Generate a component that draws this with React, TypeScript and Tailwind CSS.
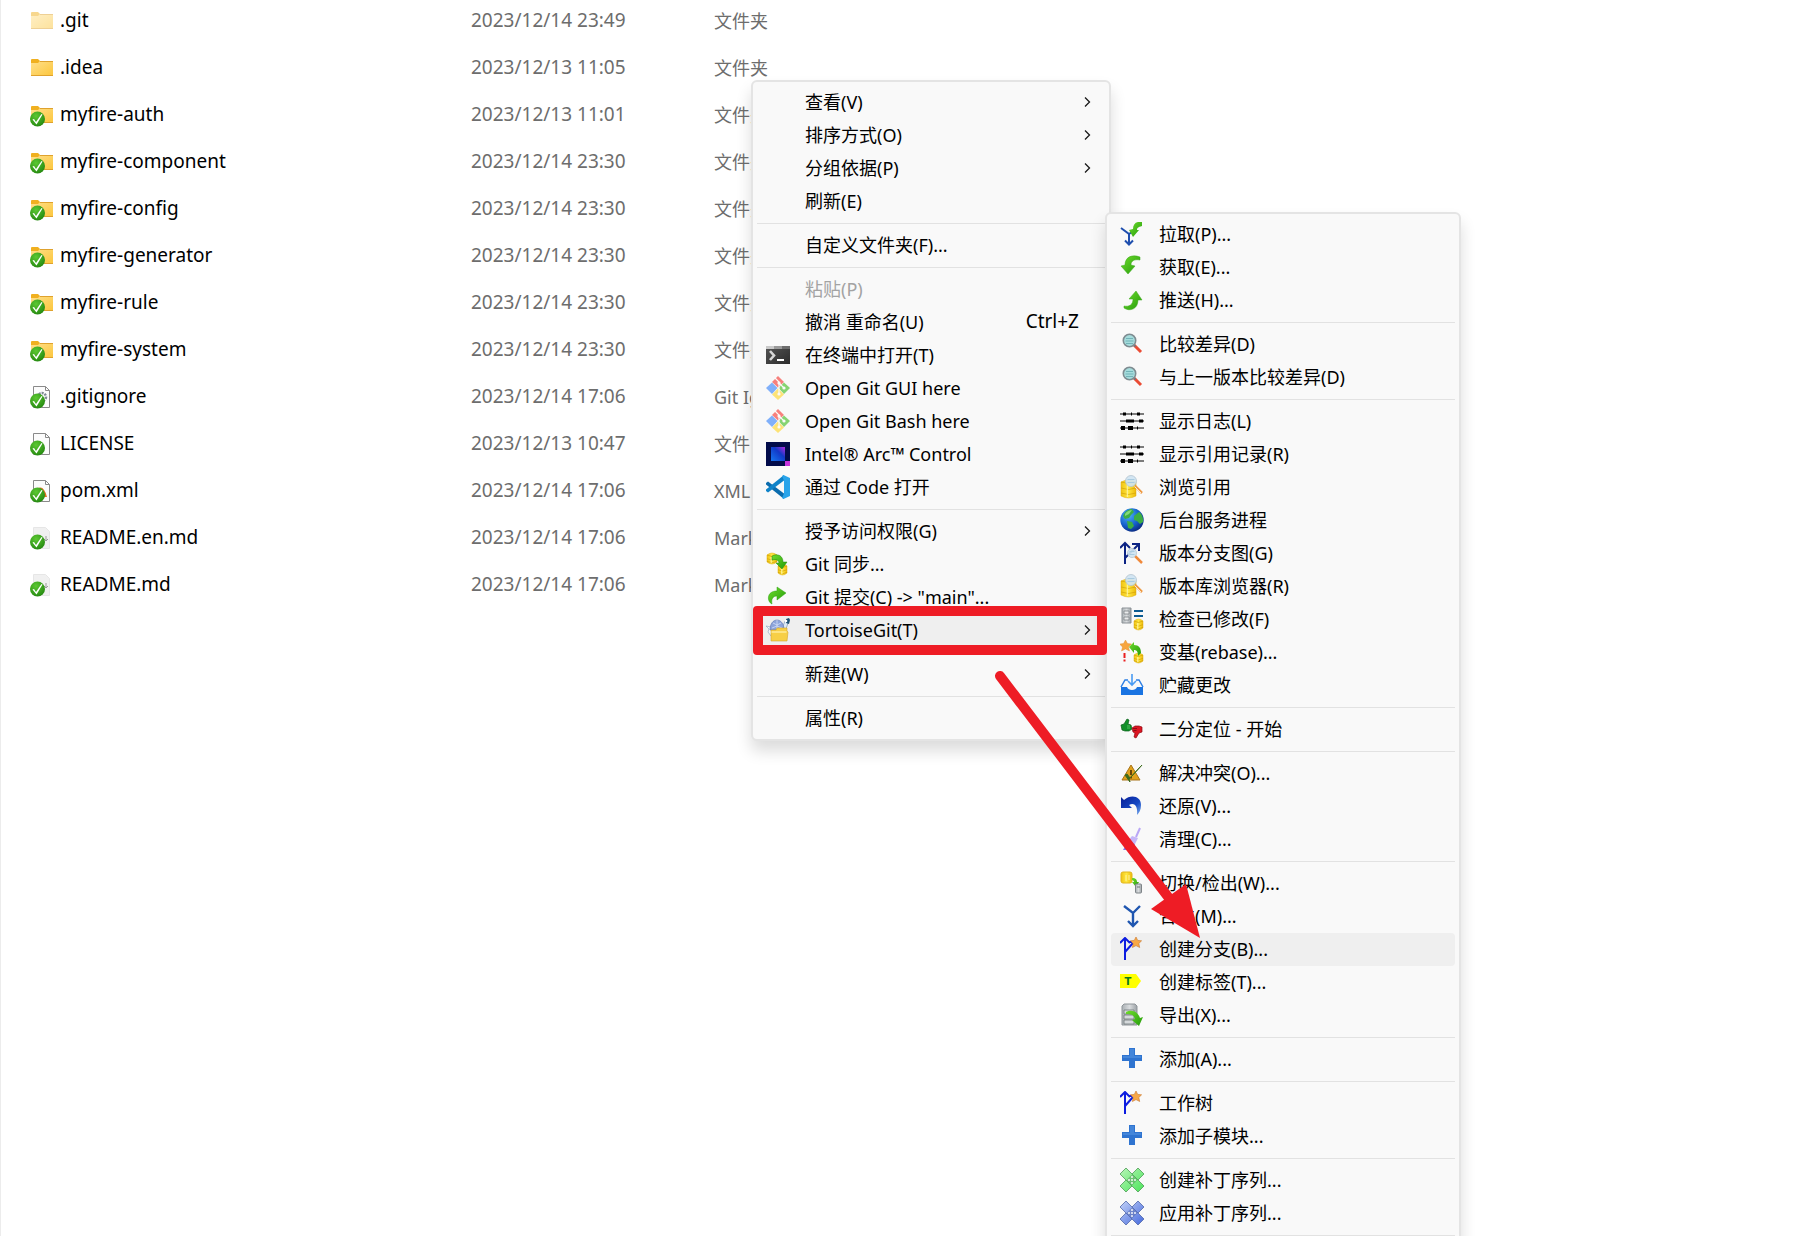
import clsx from "clsx";
import type { ReactNode } from "react";

type FileKind = "hidden" | "folder" | "git" | "blank" | "xml" | "markdown";

interface FileEntry {
  name: string;
  date: string;
  type: string;
  kind: FileKind;
  tracked?: boolean;
}

interface MenuItem {
  label: string;
  icon?: ReactNode;
  shortcut?: string;
  submenu?: boolean;
  disabled?: boolean;
  active?: boolean;
  marked?: boolean;
}

const files: FileEntry[] = [
  { name: ".git", date: "2023/12/14 23:49", type: "文件夹", kind: "hidden" },
  { name: ".idea", date: "2023/12/13 11:05", type: "文件夹", kind: "folder" },
  { name: "myfire-auth", date: "2023/12/13 11:01", type: "文件夹", kind: "folder", tracked: true },
  { name: "myfire-component", date: "2023/12/14 23:30", type: "文件夹", kind: "folder", tracked: true },
  { name: "myfire-config", date: "2023/12/14 23:30", type: "文件夹", kind: "folder", tracked: true },
  { name: "myfire-generator", date: "2023/12/14 23:30", type: "文件夹", kind: "folder", tracked: true },
  { name: "myfire-rule", date: "2023/12/14 23:30", type: "文件夹", kind: "folder", tracked: true },
  { name: "myfire-system", date: "2023/12/14 23:30", type: "文件夹", kind: "folder", tracked: true },
  { name: ".gitignore", date: "2023/12/14 17:06", type: "Git Ignore", kind: "git", tracked: true },
  { name: "LICENSE", date: "2023/12/13 10:47", type: "文件", kind: "blank", tracked: true },
  { name: "pom.xml", date: "2023/12/14 17:06", type: "XML", kind: "xml", tracked: true },
  { name: "README.en.md", date: "2023/12/14 17:06", type: "Markdown", kind: "markdown", tracked: true },
  { name: "README.md", date: "2023/12/14 17:06", type: "Markdown", kind: "markdown", tracked: true },
];

function Icon({ children }: { children: ReactNode }) {
  return (
    <svg viewBox="0 0 24 24" className="size-6 shrink-0" fill="none" aria-hidden="true">
      {children}
    </svg>
  );
}

// Gradients shared by every icon on the page
function IconDefs() {
  return (
    <svg className="absolute size-0" aria-hidden="true">
      <defs>
        <linearGradient id="folder" x1="0" y1="0" x2="1" y2="1">
          <stop offset="0" stopColor="#ffe08c" />
          <stop offset="1" stopColor="#fcc63c" />
        </linearGradient>
        <radialGradient id="check" cx="0.4" cy="0.3" r="0.75">
          <stop offset="0" stopColor="#5cc832" />
          <stop offset="1" stopColor="#23870f" />
        </radialGradient>
        <linearGradient id="green" x1="0" y1="0" x2="1" y2="1">
          <stop offset="0" stopColor="#6fdc2c" />
          <stop offset="1" stopColor="#239b0a" />
        </linearGradient>
        <linearGradient id="gold" x1="0" y1="0" x2="1" y2="0">
          <stop offset="0" stopColor="#f0c414" />
          <stop offset="0.5" stopColor="#ffe740" />
          <stop offset="1" stopColor="#edba0a" />
        </linearGradient>
        <linearGradient id="steel" x1="0" y1="0" x2="1" y2="0">
          <stop offset="0" stopColor="#aab0b4" />
          <stop offset="0.5" stopColor="#d9dcde" />
          <stop offset="1" stopColor="#9ca2a6" />
        </linearGradient>
        <linearGradient id="terminal" x1="0" y1="0" x2="1" y2="1">
          <stop offset="0" stopColor="#555" />
          <stop offset="1" stopColor="#2c2c2c" />
        </linearGradient>
        <linearGradient id="arc" x1="0" y1="1" x2="1" y2="0">
          <stop offset="0" stopColor="#1676f0" />
          <stop offset="0.6" stopColor="#1238c8" />
          <stop offset="1" stopColor="#b32be0" />
        </linearGradient>
        <radialGradient id="ocean" cx="0.35" cy="0.3" r="0.75">
          <stop offset="0" stopColor="#4cb4f4" />
          <stop offset="0.6" stopColor="#1560cc" />
          <stop offset="1" stopColor="#0b2a80" />
        </radialGradient>
        <linearGradient id="undo" x1="0" y1="0" x2="1" y2="1">
          <stop offset="0" stopColor="#0a1f96" />
          <stop offset="0.6" stopColor="#1548c4" />
          <stop offset="1" stopColor="#7fb2f0" />
        </linearGradient>
        <linearGradient id="patchGreen" x1="0" y1="0" x2="1" y2="1">
          <stop offset="0" stopColor="#b8f5b8" />
          <stop offset="1" stopColor="#4be45a" />
        </linearGradient>
        <linearGradient id="patchBlue" x1="0" y1="0" x2="1" y2="1">
          <stop offset="0" stopColor="#c3d2f8" />
          <stop offset="1" stopColor="#4468dc" />
        </linearGradient>
      </defs>
    </svg>
  );
}

function Database({ x, y, w, h }: { x: number; y: number; w: number; h: number }) {
  const ring = (at: number) => `M${x} ${at}q${w / 2} 3 ${w} 0`;
  return (
    <g>
      <path
        d={`M${x} ${y + 2}q${w / 2} -4 ${w} 0v${h - 4}q${-w / 2} 4 ${-w} 0z`}
        fill="url(#gold)"
        stroke="#dcae14"
        strokeWidth="0.5"
      />
      <path d={ring(y + 2) + ring(y + 2 + h / 3) + ring(y + 1 + (h * 2) / 3)} stroke="#d2a20a" strokeWidth="0.7" />
      <path d={`M${x + w * 0.42} ${y + 4}v${h - 5}`} stroke="#fff6a8" strokeWidth="1" />
    </g>
  );
}

function Star() {
  return (
    <path
      d="M16 0l1.700 3.400 3.900.4-2.800 2.700.9 4L16 8.600l-3.600 1.900.8-4-2.800-2.700 3.900-.4z"
      fill="#f9a845"
      stroke="#c8762c"
      strokeWidth="0.6"
    />
  );
}

function Lens({ x, y, r }: { x: number; y: number; r: number }) {
  return (
    <g>
      <circle cx={x} cy={y} r={r} fill="#cfe4f2" fillOpacity="0.92" stroke="#b4c4cf" strokeWidth="0.8" />
      <path d={`M${x - r + 2} ${y - 1.5}h${r * 2 - 4}M${x - r + 2} ${y + 1.5}h${r * 2 - 4}`} stroke="#a9cbe0" />
    </g>
  );
}

const terminalIcon = (
  <Icon>
    <path d="M0 3h24v18H0z" fill="url(#terminal)" />
    <path d="M0 3h8v3H0z" fill="#c9c9c9" />
    <path d="M8 3h8v3H8z" fill="#9a9a9a" />
    <path d="M16 3h8v3h-8z" fill="#6d6d6d" />
    <path d="M4 8l4 4.500-4 4.500" stroke="#d8d8d8" strokeWidth="2.600" />
    <path d="M11 17h7" stroke="#fff" strokeWidth="2" />
  </Icon>
);

const gitIcon = (
  <Icon>
    <path d="M12 0l6 6-6 5.500L6 6z" fill="#f7807c" />
    <path d="M6 6.500l5.500 5.500L6 18l-6-6z" fill="#80b0fa" />
    <path d="M18 6.500l6 5.500-6 6-5.500-6z" fill="#86d472" />
    <path d="M12 12.500l6 6-6 5.500-6-5.500z" fill="#fde377" />
    <path d="M9 2l4 4v13M13 7l5 5" stroke="#fafafa" strokeWidth="1.200" />
    <circle cx="13" cy="7" r="1.600" fill="#fafafa" />
    <circle cx="18" cy="12" r="1.600" fill="#fafafa" />
    <circle cx="13" cy="18" r="1.600" fill="#fafafa" />
  </Icon>
);

const arcIcon = (
  <Icon>
    <path d="M0 0h24v24H0z" fill="#020b4a" />
    <path d="M5 5h14v14H5z" fill="url(#arc)" />
    <path d="M19 19h5v5h-5z" fill="#c433dc" />
  </Icon>
);

const codeIcon = (
  <Icon>
    <path d="M0 8l2-1.500 16 12V24L0 9.500z" fill="#0b6cae" />
    <path d="M0 16l2 1.500L18 5.500V0L0 14.500z" fill="#0f83c9" />
    <path d="M17.500 0L24 3v18l-6.500 3-1.500-1 2-4.500v-13L16 1z" fill="#2aa4ea" />
  </Icon>
);

const syncIcon = (
  <Icon>
    <Database x={1} y={1} w={10} h={11} />
    <Database x={12} y={12} w={9} h={11} />
    <path d="M6 4c6-3 11 0 11 6h4l-5 7-6-6h3c0-3-3-4-7-3z" fill="url(#green)" stroke="#1e8a0c" strokeWidth="0.5" />
  </Icon>
);

const commitIcon = (
  <Icon>
    <path d="M11 2l9 6-9 7v-4c-4 0-6 3-5 8-5-2-6-13 5-13z" fill="url(#green)" stroke="#2fa313" strokeWidth="0.5" />
  </Icon>
);

const tortoiseIcon = (
  <Icon>
    <path d="M0 8l5 1 1 4-1 5-3-4 1-3z" fill="#f2f7fc" stroke="#8aa0bc" strokeWidth="0.6" />
    <path d="M17 8l2-5 3 2-2 6-2 1z" fill="#dcebf8" stroke="#6d86a8" strokeWidth="0.6" />
    <path d="M4 12C4 6 7 2 11 2s7 4 7 10z" fill="#8ca4dc" stroke="#5a70ac" strokeWidth="0.6" />
    <path d="M7 5l4 2 4-2M6 10l5-2 5 2M11 2v9" stroke="#d4def6" strokeWidth="0.8" />
    <path d="M20 1l3-1 1 2-1 4-3-1z" fill="#1f5276" />
    <circle cx="20" cy="3" r="1.300" fill="#fff" />
    <path d="M5 12h5l1-2h10v3l1 1-1 9H5z" fill="#f7cf46" stroke="#d3a62a" strokeWidth="0.6" />
    <path d="M5.500 14h15" stroke="#ffec9e" strokeWidth="1.400" />
  </Icon>
);

const pullIcon = (
  <Icon>
    <path d="M1 6l8 6v10M5 18.500l4 4 4-4M9 12l3-2" stroke="#1f4fae" strokeWidth="2" />
    <path d="M22 0c-6-1-9 2-9 7l-4 1 4 7 6-7h-2c0-2 1-3 5-4z" fill="url(#green)" />
  </Icon>
);

const fetchIcon = (
  <Icon>
    <path d="M20 2C12-1 5 2 5 10l-4 1 7 8 7-8-4-1c0-4 3-6 9-5z" fill="url(#green)" stroke="#3aa81c" strokeWidth="0.5" />
  </Icon>
);

const pushIcon = (
  <Icon>
    <path d="M4 18c5 1 9-1 9-7H9l7-8 6 9h-4c0 9-8 12-14 8z" fill="url(#green)" stroke="#3aa81c" strokeWidth="0.5" />
  </Icon>
);

const diffIcon = (
  <Icon>
    <path d="M14 13l7 7" stroke="#ea4c34" strokeWidth="3" />
    <path d="M13.500 12.500l2 2" stroke="#6e7a80" strokeWidth="2" />
    <circle cx="9.500" cy="8.500" r="6.200" fill="#a6dcdc" stroke="#7f8c91" strokeWidth="1.600" />
    <path d="M6 6.500h7M5.500 9h8M6 11.500h7" stroke="#72b4b8" />
  </Icon>
);

const logIcon = (
  <Icon>
    <path d="M0 5h24M0 12h24M0 19h24" stroke="#000" strokeWidth="1.200" />
    <path d="M3 5h3M11 5h1M17 5h3M6 12h8M19 12h4M17 19h1" stroke="#000" strokeWidth="3" />
    <path d="M1 19h4M8 19h5" stroke="#000" strokeWidth="4" />
  </Icon>
);

const browseIcon = (
  <Icon>
    <Database x={1} y={5} w={15} h={18} />
    <path d="M15 11l7 7" stroke="#ee9a45" strokeWidth="2.500" />
    <path d="M14.500 11.500l6.500 6.500" stroke="#fbe8d0" />
    <Lens x={11} y={6} r={5.5} />
  </Icon>
);

const globeIcon = (
  <Icon>
    <circle cx="12" cy="12" r="11.700" fill="url(#ocean)" />
    <path
      d="M3 8c2-5 6-7 9-7l2 3-3 3-2 3-4 1zM14 8l5-4c3 2 4.500 6 4 10l-3 2-3-3-3-1zM7 13l5 1 2 4-3 3-3-1z"
      fill="#3cae44"
    />
    <path d="M5 6c2-3 5-4 7-4l-3 4-4 2z" fill="#a4ec90" fillOpacity="0.7" />
  </Icon>
);

const graphIcon = (
  <Icon>
    <path d="M5 23V2M0 7l5-5 5 5M5 17L18 4M12 3h7v7" stroke="#0c2384" strokeWidth="2" />
    <path d="M15 15l7 7" stroke="#f08a3c" strokeWidth="2.500" />
    <Lens x={12} y={12} r={4.5} />
  </Icon>
);

const modifiedIcon = (
  <Icon>
    <path d="M2 1h9v15H2z" fill="url(#steel)" stroke="#8b9196" />
    <path d="M4 4h5v3H4zM4 10h5v3H4z" fill="#e9ebec" stroke="#7b8186" strokeWidth="0.8" />
    <path d="M14 4h9M14 9h9" stroke="#0d5c92" strokeWidth="2" />
    <Database x={14} y={12} w={9} h={11} />
  </Icon>
);

const rebaseIcon = (
  <Icon>
    <path d="M5.500 0l2 3.500 4 .5-3 3 1 4-4-2-4 2 1-4-3-3 4-.5z" fill="#f7a53e" stroke="#d8852a" strokeWidth="0.4" />
    <Database x={14} y={13} w={9} h={10} />
    <path d="M9 7l5-5v3c5 0 7 3 7 8l-3 3c0-4-1-6-4-6v3z" fill="url(#green)" />
    <path d="M4.500 13v5M4.500 19.500v2" stroke="#ea2020" strokeWidth="2" />
  </Icon>
);

const stashIcon = (
  <Icon>
    <path d="M1 14h6c1 4 9 4 10 0h6v8H1z" fill="#1a74e2" />
    <path d="M8 7H5l-4 7M16 7h3l4 7" stroke="#2d7fe4" strokeWidth="1.500" />
    <path d="M12 1v10M8 8l4 4 4-4" stroke="#4a9bf2" strokeWidth="1.600" />
  </Icon>
);

const bisectIcon = (
  <Icon>
    <path d="M1 8l3-1 3-5 2 1-1 4 3 1 1 4-3 2-4 0-3-1z" fill="#12902a" stroke="#0a5f18" strokeWidth="0.7" />
    <path d="M7 9h3M7 11h3" stroke="#5fd06c" strokeWidth="0.8" />
    <path d="M22 10v5l-3 1-3 5-2-1 1-4-2-1-1-4 3-2 4 0z" fill="#dc1622" stroke="#8e0a12" strokeWidth="0.7" />
    <path d="M13 11.500h4M13.500 13.500h3" stroke="#7c0810" strokeWidth="0.8" />
  </Icon>
);

const resolveIcon = (
  <Icon>
    <path d="M11 4l9 15H2z" fill="#e0a21c" stroke="#a8741a" />
    <path d="M11 9v5M11 16v1.500" stroke="#5e3c08" strokeWidth="1.800" />
    <path d="M5 14l5 7-1-3L22 4 10 17l-3-4z" fill="#3e6c1e" stroke="#3e6c1e" />
  </Icon>
);

const revertIcon = (
  <Icon>
    <path d="M1 3l3 3c7-6 17-4 17 5 0 5-2 8-4 10 1-8-2-13-8-10l3 3H1z" fill="url(#undo)" />
  </Icon>
);

const cleanIcon = (
  <Icon>
    <path d="M20 1l-4 9" stroke="#b9a6f6" strokeWidth="2" />
    <path d="M12 9l6 2-3 6-7-3z" fill="#c5b6f8" />
    <path d="M8 14l7 3-3 6H3z" fill="#8a76e6" />
  </Icon>
);

const switchIcon = (
  <Icon>
    <rect x="1" y="1" width="11" height="11" rx="2" fill="url(#gold)" stroke="#e2b61c" />
    <path d="M6 4v6M9 4v5" stroke="#fff3a0" />
    <path d="M12 7c4 0 5 2 5 4h2l-3 5-4-5h2c0-1-1-2-2-2z" fill="url(#green)" />
    <rect x="15.500" y="13" width="6" height="9" rx="1" fill="url(#steel)" stroke="#7e8488" />
    <path d="M17 16h3" stroke="#6e7478" />
  </Icon>
);

const mergeIcon = (
  <Icon>
    <path d="M4 2l9 7 7-7M13 8v14M8 17l5 5 5-5" stroke="#1f56b0" strokeWidth="2.400" />
  </Icon>
);

const branchIcon = (
  <Icon>
    <path d="M5 23V2M0 6l5-5 5 5M5 15l8-9M9 5h3" stroke="#0c1ce0" strokeWidth="2" />
    <Star />
  </Icon>
);

const tagIcon = (
  <Icon>
    <path d="M0 4h16l5 7-5 7H0z" fill="#ffff00" />
    <text x="8" y="15" textAnchor="middle" fontSize="10" fontWeight="700" fontFamily="DejaVu Sans, sans-serif" fill="#0c7a1c">
      T
    </text>
  </Icon>
);

const exportIcon = (
  <Icon>
    <path d="M4 1h11l2 2v19H2V3z" fill="url(#steel)" stroke="#8f9599" />
    <path d="M4 7h10v4H4zM4 12h10v4H4zM4 17h10v4H4z" fill="#d5d9db" stroke="#6f767a" strokeWidth="0.8" />
    <path d="M6 9c6-3 12 0 14 6l3-1-4 9-7-6 3-1c-1-4-4-5-9-5z" fill="url(#green)" />
  </Icon>
);

const plusIcon = (
  <Icon>
    <path d="M9 1h6v7h7v6h-7v7H9v-7H2V8h7z" fill="#2f74d0" />
    <path d="M10 2h4v7h7v2H3V9h7z" fill="#5a98e4" fillOpacity="0.5" />
  </Icon>
);

function Patch({ fill, stroke }: { fill: string; stroke: string }) {
  return (
    <Icon>
      <path d="M18 0l6 6L6 24l-6-6z" fill={fill} stroke={stroke} strokeWidth="0.8" />
      <path d="M6 0l18 18-6 6L0 6z" fill={fill} stroke={stroke} strokeWidth="0.8" />
      <path d="M12 6.500l5.500 5.500-5.500 5.500L6.500 12z" fill={stroke} fillOpacity="0.5" />
      <path d="M12 9h.01M9 12h.01M12 15h.01M15 12h.01M12 12h.01" stroke="#fff" strokeWidth="1.800" strokeLinecap="round" />
    </Icon>
  );
}

const mainMenu: MenuItem[][] = [
  [
    { label: "查看(V)", submenu: true },
    { label: "排序方式(O)", submenu: true },
    { label: "分组依据(P)", submenu: true },
    { label: "刷新(E)" },
  ],
  [{ label: "自定义文件夹(F)..." }],
  [
    { label: "粘贴(P)", disabled: true },
    { label: "撤消 重命名(U)", shortcut: "Ctrl+Z" },
    { label: "在终端中打开(T)", icon: terminalIcon },
    { label: "Open Git GUI here", icon: gitIcon },
    { label: "Open Git Bash here", icon: gitIcon },
    { label: "Intel® Arc™ Control", icon: arcIcon },
    { label: "通过 Code 打开", icon: codeIcon },
  ],
  [
    { label: "授予访问权限(G)", submenu: true },
    { label: "Git 同步...", icon: syncIcon },
    { label: 'Git 提交(C) -> "main"...', icon: commitIcon },
    { label: "TortoiseGit(T)", icon: tortoiseIcon, submenu: true, active: true, marked: true },
  ],
  [{ label: "新建(W)", submenu: true }],
  [{ label: "属性(R)" }],
];

const gitMenu: MenuItem[][] = [
  [
    { label: "拉取(P)...", icon: pullIcon },
    { label: "获取(E)...", icon: fetchIcon },
    { label: "推送(H)...", icon: pushIcon },
  ],
  [
    { label: "比较差异(D)", icon: diffIcon },
    { label: "与上一版本比较差异(D)", icon: diffIcon },
  ],
  [
    { label: "显示日志(L)", icon: logIcon },
    { label: "显示引用记录(R)", icon: logIcon },
    { label: "浏览引用", icon: browseIcon },
    { label: "后台服务进程", icon: globeIcon },
    { label: "版本分支图(G)", icon: graphIcon },
    { label: "版本库浏览器(R)", icon: browseIcon },
    { label: "检查已修改(F)", icon: modifiedIcon },
    { label: "变基(rebase)...", icon: rebaseIcon },
    { label: "贮藏更改", icon: stashIcon },
  ],
  [{ label: "二分定位 - 开始", icon: bisectIcon }],
  [
    { label: "解决冲突(O)...", icon: resolveIcon },
    { label: "还原(V)...", icon: revertIcon },
    { label: "清理(C)...", icon: cleanIcon },
  ],
  [
    { label: "切换/检出(W)...", icon: switchIcon },
    { label: "合并(M)...", icon: mergeIcon },
    { label: "创建分支(B)...", icon: branchIcon, active: true },
    { label: "创建标签(T)...", icon: tagIcon },
    { label: "导出(X)...", icon: exportIcon },
  ],
  [{ label: "添加(A)...", icon: plusIcon }],
  [
    { label: "工作树", icon: branchIcon },
    { label: "添加子模块...", icon: plusIcon },
  ],
  [
    { label: "创建补丁序列...", icon: <Patch fill="url(#patchGreen)" stroke="#4f9a58" /> },
    { label: "应用补丁序列...", icon: <Patch fill="url(#patchBlue)" stroke="#5268a8" /> },
  ],
  [],
];

function FileIcon({ kind, tracked }: { kind: FileKind; tracked?: boolean }) {
  const isFolder = kind === "folder" || kind === "hidden";

  return (
    <Icon>
      {isFolder && (
        <g opacity={kind === "hidden" ? 0.5 : 1}>
          <path d="M1 4q0-1 1-1h6l2 2v3H1z" fill="#f0b020" />
          <path d="M1 7h7l2-2h13v15H1z" fill="url(#folder)" />
          <path d="M10 5.500h13M1 19.500h22" stroke="#dfa22e" />
        </g>
      )}
      {!isFolder && (
        <path
          d="M3.500 1.500h12l4 4v17h-16z"
          fill={kind === "markdown" ? "#f0f0f0" : "#fcfcfc"}
          stroke={kind === "markdown" ? "#e6e6e6" : "#8a8a8a"}
        />
      )}
      {!isFolder && kind !== "markdown" && <path d="M15.500 1.500v4h4" stroke="#8a8a8a" />}
      {kind === "git" && <circle cx="12" cy="12" r="4" stroke="#7e8894" strokeWidth="2.500" strokeDasharray="2 1" />}
      {kind === "xml" && <path d="M8 9q6-3 9 9h-4z" fill="#e07020" />}
      {kind === "markdown" && <path d="M16 10v5M14 13l2 2 2-2" stroke="#9a9a9a" />}
      {tracked && (
        <g>
          <circle cx="7.500" cy="16" r="7.500" fill="url(#check)" />
          <path d="M2.500 16.500l1.500-.5 2 3L11.500 11l1 .5L6.500 21.500z" fill="#fff" />
        </g>
      )}
    </Icon>
  );
}

function MenuRow({ item }: { item: MenuItem }) {
  return (
    <li className="relative">
      <button
        type="button"
        disabled={item.disabled}
        className={clsx(
          "flex h-[33px] w-full items-center rounded pr-3 pb-0.5 pl-[9px] text-left whitespace-nowrap",
          item.active && "bg-[#efefef]",
          item.disabled && "text-[#a3a3a3]",
        )}
      >
        {item.icon ?? <span className="size-6 shrink-0" />}
        <span className="ml-[15px] flex-1">{item.label}</span>
        {item.shortcut && <span className="mr-3.5 text-[19px]">{item.shortcut}</span>}
        {item.submenu && (
          <svg viewBox="0 0 12 12" className="size-3" fill="none" aria-hidden="true">
            <path d="M4 1.500L8.500 6 4 10.500" stroke="#1a1a1a" strokeWidth="1.300" />
          </svg>
        )}
      </button>
      {item.marked && (
        <span className="pointer-events-none absolute -top-2 -right-0.5 -bottom-2 -left-1 z-20 rounded border-10 border-[#ee1c25]" />
      )}
    </li>
  );
}

function ContextMenu({ groups, label, className }: { groups: MenuItem[][]; label: string; className: string }) {
  return (
    <nav
      aria-label={label}
      className={clsx(
        "absolute rounded-md border-2 border-[#e4e4e4] bg-[#f9f9f9] p-1 text-lg text-black shadow-[0_10px_16px_rgba(0,0,0,0.14)]",
        className,
      )}
    >
      {groups.map((group, index) => (
        <ul
          key={index}
          className={clsx(index > 0 && "mt-[5px] border-t border-[#e2e2e2] pt-[5px]")}
        >
          {group.map((item) => (
            <MenuRow key={item.label} item={item} />
          ))}
        </ul>
      ))}
    </nav>
  );
}

export default function App() {
  return (
    <main className="relative h-screen overflow-hidden border-l border-[#ececec] bg-white font-['Noto_Sans','Noto_Sans_CJK_SC',sans-serif]">
      <IconDefs />

      <table className="-mt-[3px] w-full table-fixed text-left text-[19px]">
        <colgroup>
          <col className="w-[470px]" />
          <col className="w-[243px]" />
          <col />
        </colgroup>
        <tbody>
          {files.map((file) => (
            <tr key={file.name} className="h-[47px] text-[#6d6d6d]">
              <td className="p-0 pl-[29px]">
                <span className="flex items-center gap-1.5 text-black">
                  <FileIcon kind={file.kind} tracked={file.tracked} />
                  {file.name}
                </span>
              </td>
              <td className="p-0">{file.date}</td>
              <td className="p-0 text-lg">{file.type}</td>
            </tr>
          ))}
        </tbody>
      </table>

      <ContextMenu groups={mainMenu} label="文件夹" className="top-20 left-[750px] w-[360px]" />
      <ContextMenu groups={gitMenu} label="TortoiseGit" className="top-[212px] left-[1104px] w-[356px]" />

      {/* Arrow from the TortoiseGit entry to the create-branch entry */}
      <svg
        viewBox="0 0 220 280"
        className="pointer-events-none absolute top-[666px] left-[989px] z-30 h-[280px] w-[220px]"
        fill="none"
        aria-hidden="true"
      >
        <path d="M10 10l172 226" stroke="#ee1c25" strokeWidth="10" strokeLinecap="round" />
        <path d="M210 272l-49-29 35-25z" fill="#ee1c25" />
      </svg>
    </main>
  );
}
